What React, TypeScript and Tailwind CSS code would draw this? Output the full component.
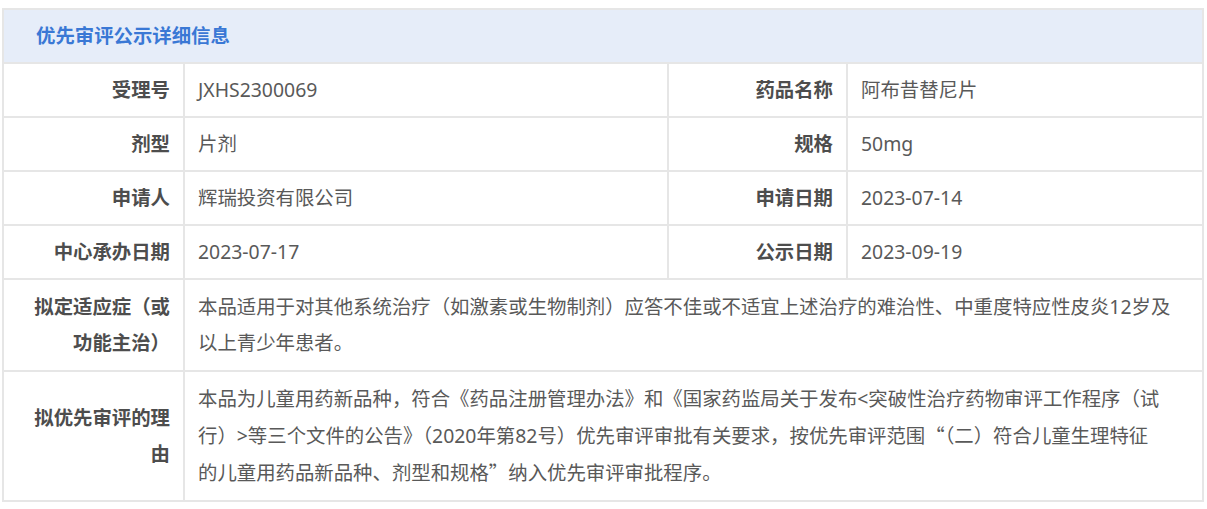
import React from "react";

const font = { fontFamily: '"Noto Sans", "Noto Sans CJK SC", sans-serif' };
const cjk = { fontFamily: '"Noto Sans CJK SC", sans-serif' };

function Label({ children, multi }: { children: React.ReactNode; multi?: boolean }) {
  return (
    <td
      className={`border-2 border-[#e6e6e6] pl-[16px] pr-[13px] ${multi ? "py-[9px]" : "py-[8px]"} text-right align-middle font-bold text-[#4d4d4d]`}
    >
      {children}
    </td>
  );
}

function Value({ children, colSpan, multi }: { children: React.ReactNode; colSpan?: number; multi?: boolean }) {
  return (
    <td
      colSpan={colSpan}
      className={`border-2 border-[#e6e6e6] px-[13px] ${multi ? "py-[9px]" : "py-[8px]"} text-left align-middle text-[#595959]`}
    >
      {children}
    </td>
  );
}

export default function App() {
  return (
    <div className="bg-white w-[1207px] h-[509px] pt-[8px] pl-[2px]" style={font} lang="zh-CN">
      <table className="w-[1200px] table-fixed border-collapse text-[19.4px] leading-[36px]">
        <colgroup>
          <col className="w-[181px]" />
          <col className="w-[484px]" />
          <col className="w-[179px]" />
          <col className="w-[356px]" />
        </colgroup>
        <tbody>
          <tr>
            <th
              colSpan={4}
              className="border-2 border-[#e6e6e6] bg-[#e6edf9] pl-[32px] py-[8px] text-left font-bold text-[#3a78d5]"
            >
              优先审评公示详细信息
            </th>
          </tr>
          <tr>
            <Label>受理号</Label>
            <Value>JXHS2300069</Value>
            <Label>药品名称</Label>
            <Value>阿布昔替尼片</Value>
          </tr>
          <tr>
            <Label>剂型</Label>
            <Value>片剂</Value>
            <Label>规格</Label>
            <Value>50mg</Value>
          </tr>
          <tr>
            <Label>申请人</Label>
            <Value>辉瑞投资有限公司</Value>
            <Label>申请日期</Label>
            <Value>2023-07-14</Value>
          </tr>
          <tr>
            <Label>中心承办日期</Label>
            <Value>2023-07-17</Value>
            <Label>公示日期</Label>
            <Value>2023-09-19</Value>
          </tr>
          <tr>
            <Label multi>拟定适应症（或功能主治）</Label>
            <Value colSpan={3} multi>
              本品适用于对其他系统治疗（如激素或生物制剂）应答不佳或不适宜上述治疗的难治性、中重度特应性皮炎12岁及以上青少年患者。
            </Value>
          </tr>
          <tr>
            <Label multi>拟优先审评的理由</Label>
            <Value colSpan={3} multi>
              本品为儿童用药新品种，符合《药品注册管理办法》和《国家药监局关于发布&lt;突破性治疗药物审评工作程序（试
              <br />
              行）&gt;等三个文件的公告》（2020年第82号）优先审评审批有关要求，按优先审评范围
              <span style={cjk}>“</span>（二）符合儿童生理特征
              <br />
              的儿童用药品新品种、剂型和规格<span style={cjk}>”</span>纳入优先审评审批程序。
            </Value>
          </tr>
        </tbody>
      </table>
    </div>
  );
}
